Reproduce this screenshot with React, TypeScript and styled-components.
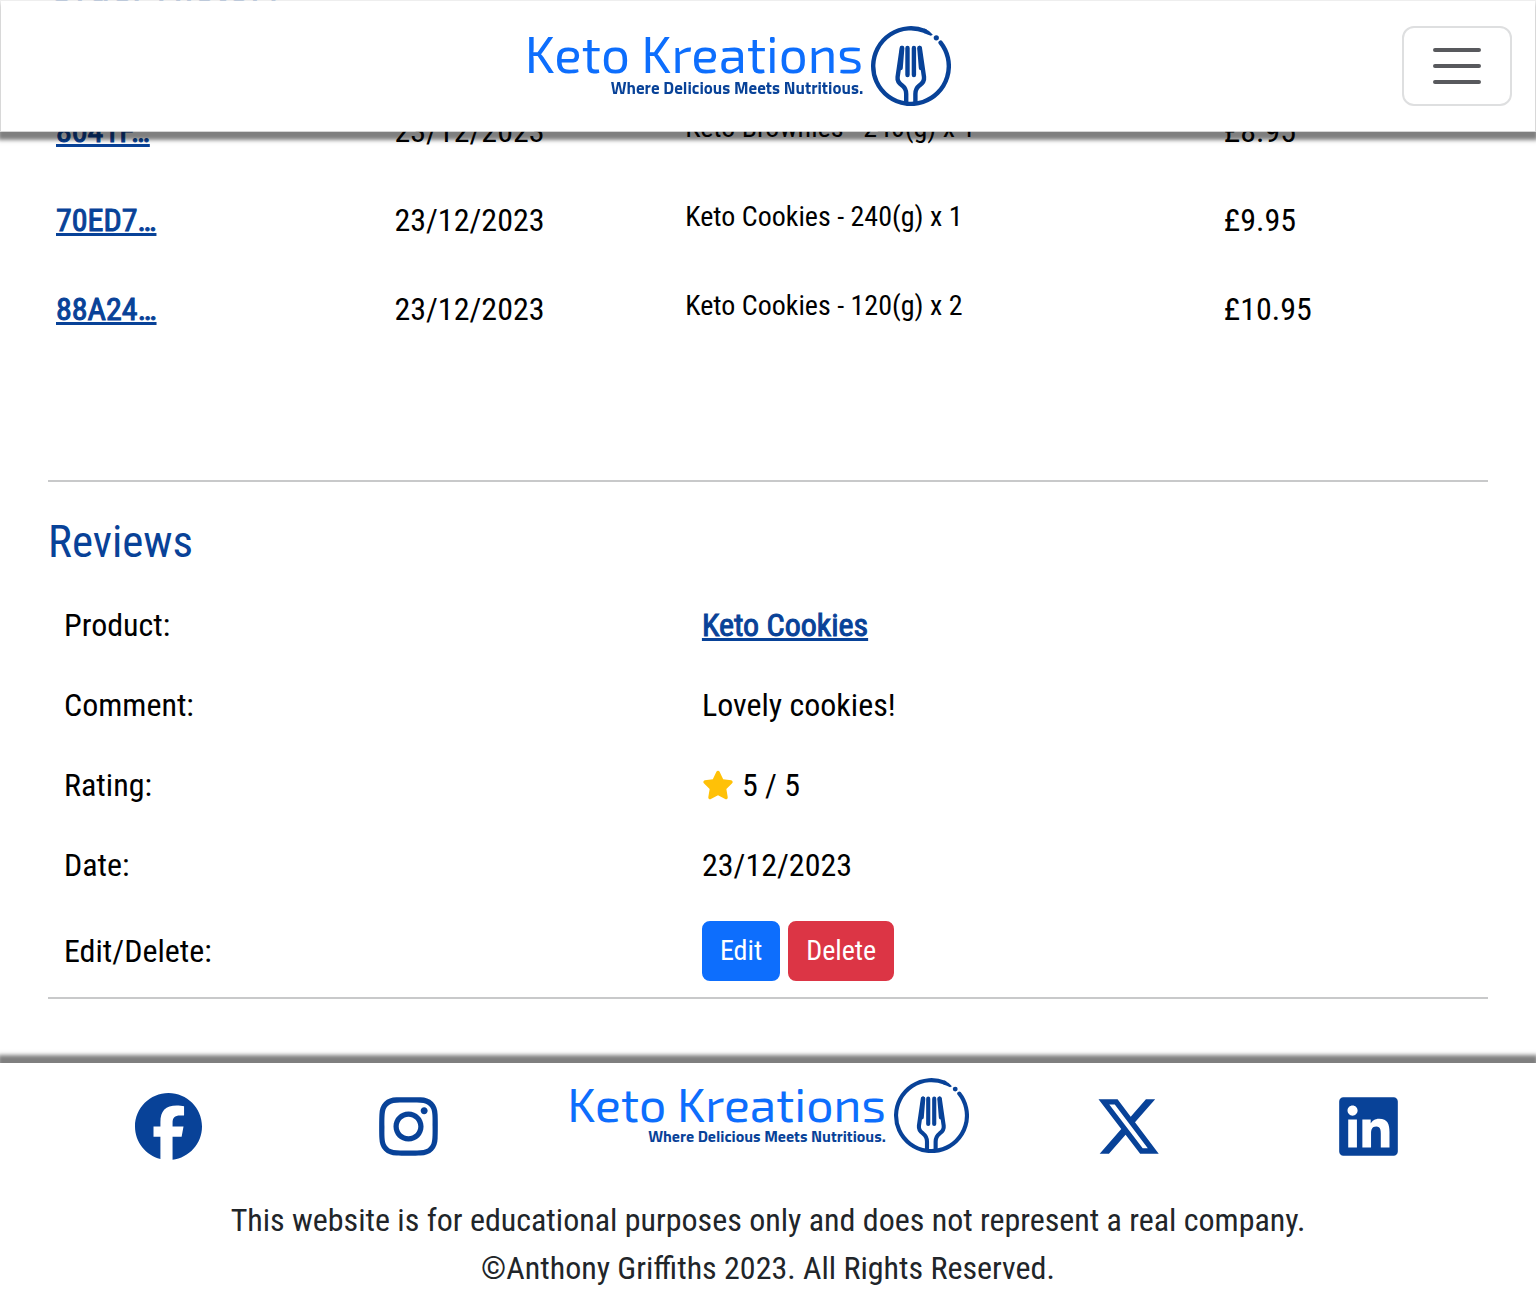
import React from 'react';
import styled, { createGlobalStyle } from 'styled-components';
import { FaFacebook, FaInstagram, FaLinkedin, FaStar, FaXTwitter } from 'react-icons/fa6';

const navy = '#084298';
const blue = '#0d6efd';

const GlobalStyle = createGlobalStyle`
  *, *::before, *::after { box-sizing: border-box; }
  body {
    margin: 0;
    background: #fff;
    color: #000;
    font-family: "Roboto Condensed", Roboto, "Liberation Sans", sans-serif;
    font-size: 32px;
    line-height: 48px;
  }
`;

const Page = styled.div`
  display: flow-root;
`;

const Header = styled.header`
  position: fixed;
  inset: 0 0 auto 0;
  z-index: 10;
  display: grid;
  grid-template-columns: 50px 1fr auto;
  align-items: center;
  padding: 25px 23px;
  background: #fff;
  background-clip: padding-box;
  border: 1px solid rgba(235, 235, 235, 0.8);
  box-shadow: 0 6px 4px 2px rgba(0, 0, 0, 0.5);
`;

const HomeLink = styled.a`
  grid-column: 2;
  justify-self: center;
  text-decoration: none;
`;

const Toggler = styled.button`
  display: block;
  height: 80px;
  padding: 8px 23px;
  background: transparent;
  border: 2px solid #dedfe0;
  border-radius: 12px;
  color: #58595d;
  cursor: pointer;

  svg {
    display: block;
  }
`;

const Brand = styled.span<{ $small?: boolean }>`
  display: flex;
  align-items: flex-start;
  gap: 8px;

  svg {
    width: ${(p) => (p.$small ? 75 : 80)}px;
    height: ${(p) => (p.$small ? 75 : 80)}px;
    color: ${navy};
  }
`;

const BrandText = styled.span`
  display: flex;
  flex-direction: column;
  align-items: flex-end;
`;

const BrandName = styled.span<{ $small?: boolean }>`
  color: ${blue};
  font-family: "Exo 2", "Titillium Web", sans-serif;
  font-size: ${(p) => (p.$small ? 48 : 51)}px;
  line-height: ${(p) => (p.$small ? 50 : 54)}px;
`;

const Tagline = styled.span<{ $small?: boolean }>`
  color: ${navy};
  font-family: "Titillium Web", "Exo 2", sans-serif;
  font-size: ${(p) => (p.$small ? 16 : 17)}px;
  font-weight: 700;
  line-height: 16px;
`;

const Main = styled.main`
  margin-top: -73px;
  padding: 0 48px 64px;
`;

const Heading = styled.h2`
  margin: 0;
  padding: 32px 0 16px;
  color: ${navy};
  font-size: 45px;
  font-weight: 400;
  line-height: 55px;
`;

const Orders = styled.section`
  padding-bottom: 127px;
  border-bottom: 2px solid #c8c9ca;
`;

const Reviews = styled.section`
  border-bottom: 2px solid #c8c9ca;
`;

const Table = styled.table`
  width: 100%;
  table-layout: fixed;
  border-collapse: collapse;
`;

const OrdersTable = styled(Table)`
  margin-top: 56px;
`;

const Col = styled.col<{ $share: number }>`
  width: ${(p) => p.$share}%;
`;

const OrderCell = styled.td`
  height: 89px;
  padding: 0 8px;
`;

const ItemsCell = styled(OrderCell)`
  padding-bottom: 6px;
  font-size: 28px;
`;

const ReviewLabel = styled.th`
  padding: 16px;
  font-weight: 400;
  text-align: left;
`;

const ReviewCell = styled.td`
  padding: 16px;
`;

const StrongLink = styled.a`
  color: ${navy};
  -webkit-text-stroke: 1px ${navy};
  text-decoration-thickness: 3px;
`;

const Rating = styled.span`
  display: flex;
  align-items: center;
  gap: 8px;

  svg {
    color: #ffc107;
  }
`;

const Actions = styled.div`
  display: flex;
  gap: 8px;
`;

const Button = styled.button<{ $tone: string }>`
  padding: 8px 16px;
  background: ${(p) => p.$tone};
  border: 2px solid ${(p) => p.$tone};
  border-radius: 8px;
  color: #fff;
  font-family: inherit;
  font-size: 28px;
  line-height: 40px;
  cursor: pointer;
`;

const Footer = styled.footer`
  padding: 15px 48px 6px;
  background: #fff;
  box-shadow: 0 -6px 4px 2px rgba(0, 0, 0, 0.5);
  color: #212529;
  text-align: center;
`;

const FooterLinks = styled.nav`
  display: grid;
  grid-template-columns: 1fr 1fr 2fr 1fr 1fr;
  align-items: center;
  justify-items: center;
  margin-bottom: 22px;
`;

const SocialLink = styled.a`
  display: flex;
  color: ${navy};
  font-size: 67px;
`;

const FooterHome = styled.a`
  padding-bottom: 21px;
  text-decoration: none;
`;

const Note = styled.p`
  margin: 0;
`;

const Plate = () => (
  <svg viewBox="0 0 80 80" fill="none" stroke="currentColor" strokeWidth="4.4" strokeLinecap="round" aria-hidden="true">
    <path d="M69.6 16.6A37.8 37.8 0 1 1 54 5" />
    <path d="M53.4 2.6Q59 4.8 61.8 8.8L59.8 9.8Q56.5 8.4 52.6 7Z" fill="currentColor" stroke="none" />
    <circle cx="65.3" cy="11.8" r="2.6" fill="currentColor" stroke="none" />
    <path d="M30.8 22L26.6 51Q26 56 31 59.3Q35.2 62.5 35.2 68V76" />
    <path d="M48.8 22L53 51Q53.6 56 48.6 59.3Q44.4 62.5 44.4 68V76" />
    <path d="M36.5 22V49M42.9 22V49" />
    <path d="M31.2 22L29.6 42M48.4 22L50 42" />
  </svg>
);

const Logo = ({ small }: { small?: boolean }) => (
  <Brand $small={small}>
    <BrandText>
      <BrandName $small={small}>Keto Kreations</BrandName>
      <Tagline $small={small}>Where Delicious Meets Nutritious.</Tagline>
    </BrandText>
    <Plate />
  </Brand>
);

const orders = [
  { id: '8041F…', date: '23/12/2023', items: 'Keto Brownies - 240(g) x 1', total: '£8.95' },
  { id: '70ED7…', date: '23/12/2023', items: 'Keto Cookies - 240(g) x 1', total: '£9.95' },
  { id: '88A24…', date: '23/12/2023', items: 'Keto Cookies - 120(g) x 2', total: '£10.95' },
];

export default function App() {
  return (
    <Page>
      <GlobalStyle />
      <Header>
        <HomeLink href="#home">
          <Logo />
        </HomeLink>
        <Toggler type="button" aria-label="Toggle navigation">
          <svg width="60" height="60" viewBox="0 0 30 30" stroke="currentColor" strokeWidth="2" strokeLinecap="round">
            <path d="M4 7h22M4 15h22M4 23h22" />
          </svg>
        </Toggler>
      </Header>

      <Main>
        <Orders>
          <Heading>Order History</Heading>
          <OrdersTable>
            <colgroup>
              <Col $share={23.5} />
              <Col $share={20.2} />
              <Col $share={37.4} />
              <Col $share={18.9} />
            </colgroup>
            <tbody>
              {orders.map((order) => (
                <tr key={order.id}>
                  <OrderCell>
                    <StrongLink href={`#order-${order.id}`}>{order.id}</StrongLink>
                  </OrderCell>
                  <OrderCell>{order.date}</OrderCell>
                  <ItemsCell>{order.items}</ItemsCell>
                  <OrderCell>{order.total}</OrderCell>
                </tr>
              ))}
            </tbody>
          </OrdersTable>
        </Orders>

        <Reviews>
          <Heading>Reviews</Heading>
          <Table>
            <colgroup>
              <Col $share={44.3} />
              <Col $share={55.7} />
            </colgroup>
            <tbody>
              <tr>
                <ReviewLabel scope="row">Product:</ReviewLabel>
                <ReviewCell>
                  <StrongLink href="#keto-cookies">Keto Cookies</StrongLink>
                </ReviewCell>
              </tr>
              <tr>
                <ReviewLabel scope="row">Comment:</ReviewLabel>
                <ReviewCell>Lovely cookies!</ReviewCell>
              </tr>
              <tr>
                <ReviewLabel scope="row">Rating:</ReviewLabel>
                <ReviewCell>
                  <Rating>
                    <FaStar aria-hidden="true" />5 / 5
                  </Rating>
                </ReviewCell>
              </tr>
              <tr>
                <ReviewLabel scope="row">Date:</ReviewLabel>
                <ReviewCell>23/12/2023</ReviewCell>
              </tr>
              <tr>
                <ReviewLabel scope="row">Edit/Delete:</ReviewLabel>
                <ReviewCell>
                  <Actions>
                    <Button type="button" $tone={blue}>Edit</Button>
                    <Button type="button" $tone="#dc3545">Delete</Button>
                  </Actions>
                </ReviewCell>
              </tr>
            </tbody>
          </Table>
        </Reviews>
      </Main>

      <Footer>
        <FooterLinks>
          <SocialLink href="#facebook" aria-label="Facebook"><FaFacebook /></SocialLink>
          <SocialLink href="#instagram" aria-label="Instagram"><FaInstagram /></SocialLink>
          <FooterHome href="#home">
            <Logo small />
          </FooterHome>
          <SocialLink href="#x" aria-label="X"><FaXTwitter /></SocialLink>
          <SocialLink href="#linkedin" aria-label="LinkedIn"><FaLinkedin /></SocialLink>
        </FooterLinks>
        <Note>This website is for educational purposes only and does not represent a real company.</Note>
        <Note>©Anthony Griffiths 2023. All Rights Reserved.</Note>
      </Footer>
    </Page>
  );
}
